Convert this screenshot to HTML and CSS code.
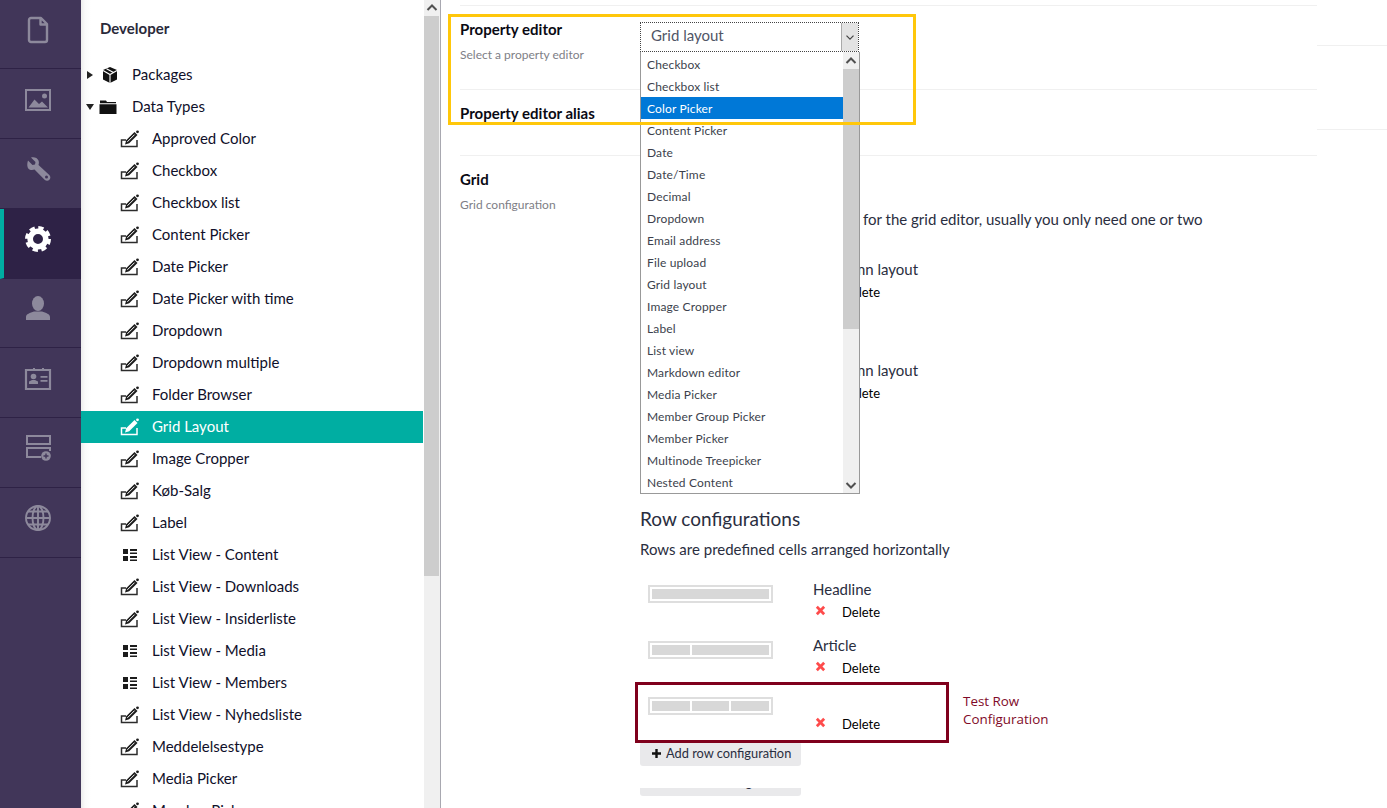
FILE: index.html
```html
<!DOCTYPE html>
<html lang="en">
<head>
<meta charset="utf-8">
<title>Developer - Data Types</title>
<link rel="stylesheet" href="styles.css">
</head>
<body>
<svg class="defs" width="0" height="0" aria-hidden="true">
  <symbol id="i-edit" viewBox="0 0 20 18">
    <path d="M6 10H1.500v6.500h15.500V10" fill="none" stroke="#2c2c2c" stroke-width="1.500"/>
    <path d="M5 14.500l1.200-4.200 8.300-8.300 3 3-8.300 8.300z" fill="currentColor"/>
    <path d="M7.400 11.800l7.200-7.200" fill="none" stroke="#fff" stroke-width="1"/>
    <circle cx="17.500" cy="1.800" r="1.400" fill="currentColor"/>
  </symbol>
  <symbol id="i-list" viewBox="0 0 16 14">
    <path d="M1 1h5v5H1zM1 8h5v5H1zM8 1h7v2H8zM8 4.500h7v1.500H8zM8 8h7v2H8zM8 11.500h7v1.500H8z" fill="currentColor"/>
  </symbol>
</svg>

<nav class="nav">
  <a class="nav-item">
    <svg class="nav-icon" viewBox="0 0 28 28"><path d="M7 2h10l6 6v16a2 2 0 0 1-2 2H7a2 2 0 0 1-2-2V4a2 2 0 0 1 2-2zM16.500 2.500V8.500h6" fill="none" stroke="currentColor" stroke-width="2.400" stroke-linejoin="round"/></svg>
  </a>
  <a class="nav-item">
    <svg class="nav-icon" viewBox="0 0 28 28"><rect x="2" y="4" width="24" height="20" fill="none" stroke="currentColor" stroke-width="2"/><path d="M4.500 21.500l6-8 4.500 4.500 3-2.500 6 6z" fill="currentColor"/><circle cx="20.500" cy="10" r="2.500" fill="currentColor"/></svg>
  </a>
  <a class="nav-item">
    <svg class="nav-icon" viewBox="0 0 28 28"><path d="M4 4.500l4.500 4.500 2.500-.5.500-2.500L7 1.600c3-.9 6.500.3 7.500 3 .6 1.600.5 3 0 4.300L25.300 19c1.500 1.500 1.300 3.600.1 4.800-1.300 1.300-3.300 1.400-4.800-.1L10.500 13.600C9 14.200 7 14.300 5.400 13.500 2.900 12.200 2.900 7.500 4 4.500z" fill="currentColor"/><circle cx="22.500" cy="21" r="1.500" fill="#413659"/></svg>
  </a>
  <a class="nav-item is-active">
    <svg class="nav-icon" viewBox="0 0 28 28"><circle cx="14" cy="14" r="7.800" fill="none" stroke="currentColor" stroke-width="5.600"/><circle cx="14" cy="14" r="11.300" fill="none" stroke="currentColor" stroke-width="3.400" stroke-dasharray="5.300 3.570"/></svg>
  </a>
  <a class="nav-item">
    <svg class="nav-icon" viewBox="0 0 28 28"><ellipse cx="14" cy="8.500" rx="6" ry="7.500" fill="currentColor"/><path d="M2 25v-3c0-3 4-4 8-5.500h8c4 1.500 8 2.500 8 5.500v3z" fill="currentColor"/></svg>
  </a>
  <a class="nav-item">
    <svg class="nav-icon" viewBox="0 0 28 28"><path d="M2 5h24v19H2z" fill="none" stroke="currentColor" stroke-width="2.200"/><circle cx="9.500" cy="11.500" r="2.800" fill="currentColor"/><path d="M5 19v-2.500l3-1.500h3l3 1.500V19zM16.500 11h7v1.800h-7zM16.500 15h7v1.800h-7z" fill="currentColor"/><path d="M9 3h2v3H9zM18 3h2v3h-2z" fill="currentColor"/></svg>
  </a>
  <a class="nav-item">
    <svg class="nav-icon" viewBox="0 0 28 28"><rect x="3" y="2" width="23" height="8" fill="none" stroke="currentColor" stroke-width="2"/><path d="M17 23H3v-9h23v3" fill="none" stroke="currentColor" stroke-width="2"/><circle cx="22" cy="22" r="4.800" fill="currentColor"/><path d="M22 19.500v5M19.500 22h5" stroke="#413659" stroke-width="1.400"/></svg>
  </a>
  <a class="nav-item">
    <svg class="nav-icon" viewBox="0 0 28 28"><g fill="none" stroke="currentColor" stroke-width="1.900"><circle cx="14" cy="14" r="12"/><ellipse cx="14" cy="14" rx="5.500" ry="12"/><path d="M14 2v24M2 14h24M4 7.500h20M4 20.500h20"/></g></svg>
  </a>
</nav>

<aside class="tree">
  <h2 class="tree-title">Developer</h2>
  <ul class="tree-list">
    <li class="tree-row is-root">
      <span class="caret caret-right"></span>
      <svg class="root-icon package-icon" viewBox="0 0 16 16"><path d="M8 0l7 3v9.500L8 16l-7-3.500V3z" fill="#111"/><path d="M8 7.500V16M1 3.500l7 4 7-4M4.500 1.800l7 3.700" fill="none" stroke="#fff" stroke-width="1.100"/></svg>
      <span class="row-text">Packages</span>
    </li>
    <li class="tree-row is-root">
      <span class="caret caret-down"></span>
      <svg class="root-icon folder-icon" viewBox="0 0 18 16"><path d="M1 3.500V1.500h6l1 1.500h9v1.300H1zM.5 5.300h17V15H.5z" fill="#111"/></svg>
      <span class="row-text">Data Types</span>
    </li>
    <li class="tree-row"><svg class="row-icon"><use href="#i-edit"/></svg><span class="row-text">Approved Color</span></li>
    <li class="tree-row"><svg class="row-icon"><use href="#i-edit"/></svg><span class="row-text">Checkbox</span></li>
    <li class="tree-row"><svg class="row-icon"><use href="#i-edit"/></svg><span class="row-text">Checkbox list</span></li>
    <li class="tree-row"><svg class="row-icon"><use href="#i-edit"/></svg><span class="row-text">Content Picker</span></li>
    <li class="tree-row"><svg class="row-icon"><use href="#i-edit"/></svg><span class="row-text">Date Picker</span></li>
    <li class="tree-row"><svg class="row-icon"><use href="#i-edit"/></svg><span class="row-text">Date Picker with time</span></li>
    <li class="tree-row"><svg class="row-icon"><use href="#i-edit"/></svg><span class="row-text">Dropdown</span></li>
    <li class="tree-row"><svg class="row-icon"><use href="#i-edit"/></svg><span class="row-text">Dropdown multiple</span></li>
    <li class="tree-row"><svg class="row-icon"><use href="#i-edit"/></svg><span class="row-text">Folder Browser</span></li>
    <li class="tree-row is-selected"><svg class="row-icon"><use href="#i-edit"/></svg><span class="row-text">Grid Layout</span></li>
    <li class="tree-row"><svg class="row-icon"><use href="#i-edit"/></svg><span class="row-text">Image Cropper</span></li>
    <li class="tree-row"><svg class="row-icon"><use href="#i-edit"/></svg><span class="row-text">Køb-Salg</span></li>
    <li class="tree-row"><svg class="row-icon"><use href="#i-edit"/></svg><span class="row-text">Label</span></li>
    <li class="tree-row"><svg class="row-icon list-icon"><use href="#i-list"/></svg><span class="row-text">List View - Content</span></li>
    <li class="tree-row"><svg class="row-icon"><use href="#i-edit"/></svg><span class="row-text">List View - Downloads</span></li>
    <li class="tree-row"><svg class="row-icon"><use href="#i-edit"/></svg><span class="row-text">List View - Insiderliste</span></li>
    <li class="tree-row"><svg class="row-icon list-icon"><use href="#i-list"/></svg><span class="row-text">List View - Media</span></li>
    <li class="tree-row"><svg class="row-icon list-icon"><use href="#i-list"/></svg><span class="row-text">List View - Members</span></li>
    <li class="tree-row"><svg class="row-icon"><use href="#i-edit"/></svg><span class="row-text">List View - Nyhedsliste</span></li>
    <li class="tree-row"><svg class="row-icon"><use href="#i-edit"/></svg><span class="row-text">Meddelelsestype</span></li>
    <li class="tree-row"><svg class="row-icon"><use href="#i-edit"/></svg><span class="row-text">Media Picker</span></li>
    <li class="tree-row"><svg class="row-icon"><use href="#i-edit"/></svg><span class="row-text">Member Picker</span></li>
  </ul>
</aside>

<div class="scrollbar tree-scroll">
  <span class="sb-btn"><svg viewBox="0 0 16 16" class="sb-arrow"><path d="M3.500 10L8 5.500l4.500 4.500" /></svg></span>
  <span class="sb-thumb tree-thumb"></span>
</div>

<main class="main">
  <div class="content">
    <section class="prop prop-editor">
      <div class="prop-label">
        <h3 class="prop-title">Property editor</h3>
        <p class="prop-desc">Select a property editor</p>
      </div>
      <div class="picker">
        <div class="select-box">
          <span class="select-value">Grid layout</span>
          <span class="select-btn"><svg viewBox="0 0 16 16" class="select-arrow"><path d="M4 6.500l4 4 4-4"/></svg></span>
        </div>
        <div class="popup">
          <ul class="options">
            <li class="option">Checkbox</li>
            <li class="option">Checkbox list</li>
            <li class="option is-highlighted">Color Picker</li>
            <li class="option">Content Picker</li>
            <li class="option">Date</li>
            <li class="option">Date/Time</li>
            <li class="option">Decimal</li>
            <li class="option">Dropdown</li>
            <li class="option">Email address</li>
            <li class="option">File upload</li>
            <li class="option">Grid layout</li>
            <li class="option">Image Cropper</li>
            <li class="option">Label</li>
            <li class="option">List view</li>
            <li class="option">Markdown editor</li>
            <li class="option">Media Picker</li>
            <li class="option">Member Group Picker</li>
            <li class="option">Member Picker</li>
            <li class="option">Multinode Treepicker</li>
            <li class="option">Nested Content</li>
          </ul>
          <div class="scrollbar popup-scroll">
            <span class="sb-btn"><svg viewBox="0 0 16 16" class="sb-arrow"><path d="M3.500 10L8 5.500l4.500 4.500"/></svg></span>
            <span class="sb-thumb popup-thumb"></span>
            <span class="sb-fill"></span>
            <span class="sb-btn"><svg viewBox="0 0 16 16" class="sb-arrow"><path d="M3.500 6L8 10.500 12.500 6"/></svg></span>
          </div>
        </div>
      </div>
    </section>

    <section class="prop prop-alias">
      <h3 class="prop-title">Property editor alias</h3>
    </section>

    <section class="prop prop-grid">
      <div class="prop-label">
        <h3 class="prop-title">Grid</h3>
        <p class="prop-desc">Grid configuration</p>
      </div>
      <div class="grid-config">
        <p class="body-text layouts-text">Layouts are the overall work area for the grid editor, usually you only need one or two different layouts</p>
        <div class="layout-row">
          <div class="row-meta">
            <span class="row-name">1 column layout</span>
            <span class="row-delete"><svg class="x-icon" viewBox="0 0 12 12"><path d="M2 2l8 8M10 2l-8 8"/></svg><span>Delete</span></span>
          </div>
        </div>
        <div class="layout-row">
          <div class="row-meta">
            <span class="row-name">2 column layout</span>
            <span class="row-delete"><svg class="x-icon" viewBox="0 0 12 12"><path d="M2 2l8 8M10 2l-8 8"/></svg><span>Delete</span></span>
          </div>
        </div>

        <h4 class="config-heading">Row configurations</h4>
        <p class="body-text rows-text">Rows are predefined cells arranged horizontally</p>

        <div class="config-rows">
          <div class="config-row">
            <div class="preview"><span class="cell"></span></div>
            <div class="row-meta">
              <span class="row-name">Headline</span>
              <span class="row-delete"><svg class="x-icon" viewBox="0 0 12 12"><path d="M2 2l8 8M10 2l-8 8"/></svg><span>Delete</span></span>
            </div>
          </div>
          <div class="config-row">
            <div class="preview"><span class="cell cell-narrow"></span><span class="cell"></span></div>
            <div class="row-meta">
              <span class="row-name">Article</span>
              <span class="row-delete"><svg class="x-icon" viewBox="0 0 12 12"><path d="M2 2l8 8M10 2l-8 8"/></svg><span>Delete</span></span>
            </div>
          </div>
          <div class="config-row is-marked">
            <div class="preview"><span class="cell"></span><span class="cell"></span><span class="cell"></span></div>
            <div class="row-meta">
              <span class="row-name"></span>
              <span class="row-delete"><svg class="x-icon" viewBox="0 0 12 12"><path d="M2 2l8 8M10 2l-8 8"/></svg><span>Delete</span></span>
            </div>
            <div class="mark-box"></div>
            <div class="mark-note">Test Row<br>Configuration</div>
          </div>
        </div>

        <button class="add-btn" type="button"><svg class="plus" viewBox="0 0 9 9"><path d="M3.300 0h2.400v3.300H9v2.400H5.700V9H3.300V5.700H0V3.300h3.300z"/></svg>Add row configuration</button>
        <div class="clip-wrap"><button class="add-btn clipped" type="button">Add settings</button></div>
      </div>
    </section>
  </div>
  <div class="rail">
    <div class="rail-a"></div>
    <div class="rail-b"></div>
  </div>
  <div class="yellow-box"></div>
</main>
</body>
</html>
```

FILE: styles.css
```css
* { box-sizing: border-box; }
html, body { margin: 0; padding: 0; }
body {
  display: flex;
  width: 1387px;
  height: 808px;
  overflow: hidden;
  background: #fff;
  font-family: Lato, "Open Sans", sans-serif;
  font-size: 15px;
  color: #1b264f;
}
ul { list-style: none; margin: 0; padding: 0; }
h2, h3, h4, p { margin: 0; }
.defs { position: absolute; }

/* left navigation */
.nav {
  flex: 0 0 81px;
  display: grid;
  grid-auto-rows: 69.7px;
  align-content: start;
  background: #413659;
}
.nav-item {
  display: flex;
  align-items: center;
  justify-content: center;
  padding: 0 5px 8px 0;
  border-bottom: 1px solid #2e2246;
  color: #8d899c;
}
.nav-item:first-child { margin-bottom: 1px; padding-bottom: 7px; }
.nav-item.is-active {
  background: #2e2246;
  color: #fff;
  border-left: 4px solid #00aea2;
  padding-right: 9px;
}
.nav-icon { width: 28px; height: 28px; }

/* tree */
.tree {
  flex: 0 0 342px;
  height: 808px;
  overflow: hidden;
  background: linear-gradient(to right, #ececec 0, #fafafa 4px, #fff 10px);
}
.tree-title {
  padding: 18px 0 0 19px;
  height: 59px;
  font-size: 15px;
  line-height: 20px;
  font-weight: 700;
  color: #2a2a3a;
}
.tree-row {
  display: flex;
  align-items: center;
  height: 32px;
  padding-left: 39px;
  color: #10102a;
  white-space: nowrap;
}
.row-text { line-height: 20px; margin-bottom: 2px; }
.tree-row.is-root { padding-left: 6px; }
.tree-row.is-selected { background: #00aea2; color: #fff; }
.row-icon { width: 20px; height: 18px; margin-right: 12px; flex: none; color: #1c1c1c; }
.is-selected .row-icon { filter: brightness(0) invert(1); }
.list-icon { width: 16px; height: 14px; margin: 0 14px 0 2px; }
.root-icon { height: 16px; margin-right: 14px; flex: none; }
.package-icon { width: 16px; }
.folder-icon { width: 18px; margin-right: 15px; }
.caret { width: 0; height: 0; flex: none; border-style: solid; }
.caret-right { border-width: 4.500px 0 4.500px 6px; border-color: transparent transparent transparent #222; margin-right: 9px; }
.caret-down { border-width: 6px 4.500px 0; border-color: #222 transparent transparent; margin-left: -1px; margin-right: 5px; }

/* scrollbars */
.scrollbar { display: flex; flex-direction: column; background: #f0f0f0; }
.tree-scroll {
  flex: 0 0 18px;
  height: 808px;
  border-left: 1px solid #fff;
  border-right: 1px solid #a8a8b0;
}
.sb-btn { height: 16px; flex: none; display: flex; align-items: center; justify-content: center; background: #f0f0f0; }
.sb-arrow { width: 16px; height: 16px; fill: none; stroke: #505050; stroke-width: 2; }
.sb-thumb { background: #cdcdcd; flex: none; }
.tree-thumb { height: 560px; margin-right: 1px; }
.sb-fill { flex: 1; }

/* main */
.main { flex: 1; display: flex; position: relative; padding-left: 19px; }
.content { width: 857px; flex: none; padding-top: 5px; }
.rail { flex: 1; }
.rail-a { height: 46px; border-bottom: 1px solid #f0f0f0; }
.rail-b { height: 84px; border-bottom: 1px solid #f0f0f0; }
.prop { display: flex; border-top: 1px solid #f0f0f0; }
.prop-editor { height: 84px; padding-top: 13px; }
.prop-alias { height: 66px; padding-top: 13px; }
.prop-grid { padding-top: 13px; }
.prop-label { width: 180px; flex: none; }
.prop-title { font-size: 15px; line-height: 20px; font-weight: 700; color: #0a0a14; }
.prop-desc { margin-top: 8px; font-size: 12px; line-height: 16px; color: #7e7e86; }

/* select */
.picker { position: relative; width: 220px; }
.select-box {
  display: flex;
  height: 30px;
  margin-top: 3px;
  width: 219px;
  border: 1px dotted #444;
}
.select-value { flex: 1; padding-left: 10px; line-height: 24px; color: #515566; font-size: 15px; }
.select-btn { width: 17px; display: flex; align-items: center; justify-content: center; background: #e3e3e3; border-left: 1px solid #aaa; }
.select-arrow { width: 14px; height: 14px; fill: none; stroke: #444; stroke-width: 1.400; }
.popup {
  position: absolute;
  z-index: 3;
  left: 0;
  top: 33px;
  width: 220px;
  height: 442px;
  display: flex;
  background: #fff;
  border: 1px solid #999;
  border-top: 0;
}
.options { flex: 1; padding-top: 1px; }
.option {
  height: 22px;
  padding-left: 6px;
  font-size: 12px;
  line-height: 24px;
  letter-spacing: .15px;
  color: #3c3f4c;
}
.option.is-highlighted { background: #0078d7; color: #fff; }
.popup-scroll { width: 16px; flex: none; height: 441px; }
.popup-scroll .sb-btn { height: 17px; }
.popup-thumb { height: 260px; }

/* grid config */
.grid-config { flex: 1; padding-top: 40px; }
.body-text { font-size: 15px; line-height: 20px; color: #2a2e40; }
.layouts-text { width: 600px; text-indent: 2px; }
.layout-row { height: 101px; padding-left: 173px; }
.layouts-text + .layout-row { margin-top: 10px; }
.row-meta { display: flex; flex-direction: column; }
.config-row .row-meta { margin-top: -1px; }
.row-name { height: 20px; line-height: 20px; font-size: 15px; color: #2a2e40; }
.row-delete { display: flex; align-items: center; height: 20px; margin-top: 3px; font-size: 13px; color: #000; padding-left: 2px; }
.x-icon { width: 11px; height: 11px; margin-right: 16px; margin-top: -3px; fill: none; stroke: #fe4b4b; stroke-width: 3; flex: none; }
.config-heading { margin-top: 46px; font-size: 19px; line-height: 24px; font-weight: 400; color: #2a2e40; }
.rows-text { margin-top: 8px; }
.config-rows { margin-top: 21px; display: flex; flex-direction: column; gap: 6px; }
.config-row { position: relative; display: flex; height: 50px; padding-left: 8px; }
.preview {
  width: 125px;
  height: 18px;
  margin-top: 5px;
  margin-right: 40px;
  padding: 2px;
  display: flex;
  gap: 2px;
  flex: none;
  border: 2px solid #dedede;
}
.cell { flex: 1; background: #d8d8d8; }
.cell-narrow { flex: 0 0 38px; }
.mark-box {
  position: absolute;
  left: -5px;
  top: -10px;
  width: 314px;
  height: 61px;
  border: 3px solid #7f001c;
}
.mark-note {
  position: absolute;
  left: 323px;
  top: 0;
  font-family: "Open Sans", sans-serif;
  font-size: 13.400px;
  line-height: 18px;
  color: #7f0a28;
  white-space: nowrap;
}
.add-btn {
  display: flex;
  align-items: center;
  width: 161px;
  height: 24px;
  padding: 0 0 2px 12px;
  border: 0;
  border-radius: 3px;
  background: #e9e9eb;
  font-family: Lato, sans-serif;
  font-size: 12.800px;
  line-height: 20px;
  color: #2a2e40;
}
.plus { width: 9px; height: 9px; margin-right: 5px; fill: #111; flex: none; }
.clip-wrap { height: 8px; margin-top: 22px; overflow: hidden; position: relative; }
.clipped { position: absolute; left: 0; bottom: 0; padding: 0 0 4px 48px; }

.yellow-box {
  position: absolute;
  z-index: 5;
  left: 7px;
  top: 14px;
  width: 468px;
  height: 111px;
  border: 3px solid #ffc70a;
  pointer-events: none;
}
```
